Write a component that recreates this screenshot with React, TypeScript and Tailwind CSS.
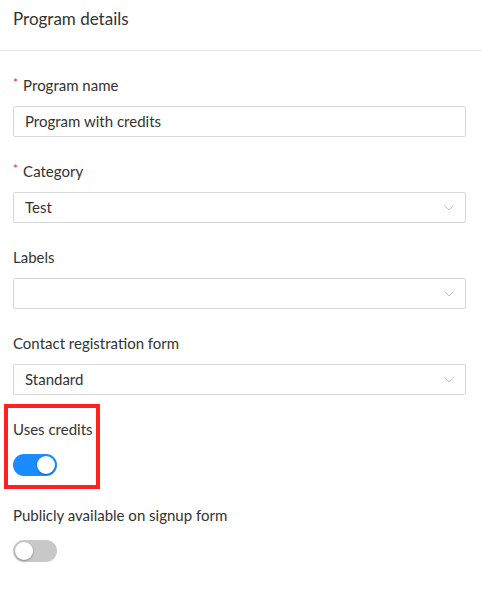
import React from "react";

const font = { fontFamily: "Lato, 'Open Sans', sans-serif" };

function Chevron() {
  return (
    <svg width="10" height="6" viewBox="0 0 10 6" fill="none" className="shrink-0">
      <path d="M0.5 0.5l4.5 4.5 4.5-4.5" stroke="#bfbfbf" strokeWidth="1" />
    </svg>
  );
}

function Label({ text, required }: { text: string; required?: boolean }) {
  return (
    <div className="flex items-center h-5 mb-[11px] text-[15px] text-[#333]">
      {required && <span className="text-[#f5222d] text-[12px] mr-[5px] -mt-[4px]">*</span>}
      {text}
    </div>
  );
}

function Field({
  label,
  value,
  required,
  select,
}: {
  label: string;
  value: string;
  required?: boolean;
  select?: boolean;
}) {
  return (
    <div className="mb-[24px]">
      <Label text={label} required={required} />
      <div className="h-[31px] border border-[#d9d9d9] rounded-[2px] flex items-center pl-[11px] pr-[11px] text-[15px] text-[#333]">
        <span className="flex-1">{value}</span>
        {select && <Chevron />}
      </div>
    </div>
  );
}

function Toggle({ on }: { on: boolean }) {
  return (
    <div
      className={`relative w-[44px] h-[22px] rounded-full ${on ? "bg-[#1a8cff]" : "bg-[#c8c8c8]"}`}
    >
      <div
        className={`absolute top-[2px] w-[18px] h-[18px] rounded-full bg-white shadow-[0_1px_2px_rgba(0,0,0,0.3)] ${
          on ? "left-[24px]" : "left-[2px]"
        }`}
      />
    </div>
  );
}

export default function App() {
  return (
    <div className="w-[482px] h-[592px] bg-white" style={font}>
      <div className="h-[51px] border-b border-[#e8e8e8] px-[13px] pt-[6px] text-[17px] text-[#333]">
        Program details
      </div>
      <div className="px-[13px] pt-[24px] w-[453px] box-content">
        <Field label="Program name" value="Program with credits" required />
        <Field label="Category" value="Test" required select />
        <Field label="Labels" value="" select />
        <Field label="Contact registration form" value="Standard" select />
        <div className="relative mt-[2px]">
          <div className="absolute -left-[9px] -top-[15px] w-[96px] -bottom-[13px] border-[4px] border-[#ff2020]" />
          <div className="h-5 flex items-center text-[15px] text-[#333] mb-[15px]">Uses credits</div>
          <Toggle on />
        </div>
        <div className="mt-[29px]">
          <div className="h-5 flex items-center text-[15px] text-[#333] mb-[15px]">
            Publicly available on signup form
          </div>
          <Toggle on={false} />
        </div>
      </div>
    </div>
  );
}
